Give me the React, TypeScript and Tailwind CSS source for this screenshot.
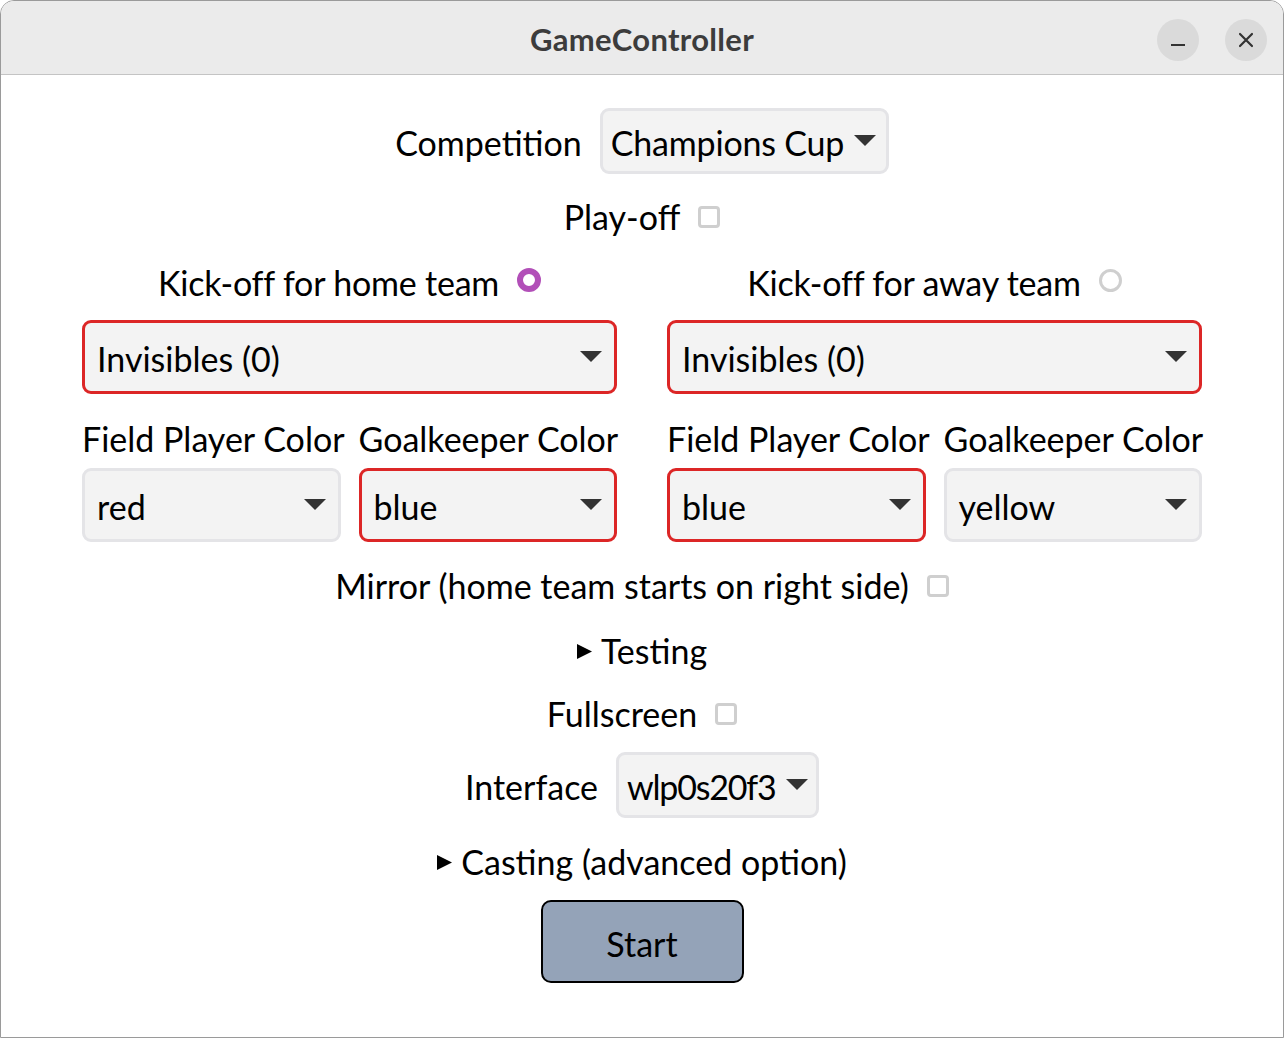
import React from 'react';

const font = { fontFamily: 'Lato, "Noto Sans", sans-serif' };

function Caret() {
  return (
    <svg width="22" height="12" viewBox="0 0 22 12" className="shrink-0">
      <path d="M0 0 L22 0 L11 11 Z" fill="#333333" />
    </svg>
  );
}

function Select({
  value,
  invalid,
  className,
  textClass = '',
}: {
  value: string;
  invalid?: boolean;
  className: string;
  textClass?: string;
}) {
  return (
    <div
      className={`flex items-center justify-between gap-[10px] rounded-[9px] bg-[#f3f3f3] border-[3px] ${
        invalid ? 'border-[#dc2626]' : 'border-[#e4e4e7]'
      } ${className}`}
    >
      <span className={`text-black leading-none pt-[4px] whitespace-nowrap ${textClass}`}>{value}</span>
      <Caret />
    </div>
  );
}

function Checkbox() {
  return <span className="inline-block w-[22px] h-[22px] rounded-[4px] border-[3px] border-[#cfcfcf] bg-white" />;
}

function Triangle() {
  return (
    <svg width="15" height="15" viewBox="0 0 15 15" className="shrink-0 mt-[3px]">
      <path d="M0 0 L15 7.5 L0 15 Z" fill="#000" />
    </svg>
  );
}

function App() {
  return (
    <div className="w-[1284px] h-[1038px] bg-white text-[34px] text-black" style={font}>
      <div className="h-full flex flex-col rounded-t-[14px] border border-[#9a9a9a] overflow-hidden">
        <div className="h-[74px] shrink-0 relative flex items-center justify-center bg-[#ebebeb] border-b border-[#c4c4c4]">
          <span className="text-[31px] font-bold text-[#3c3c3c] tracking-[0.3px] pt-[3px]">GameController</span>
          <div className="absolute right-[16px] top-[18px] flex gap-[26px]">
            <span className="w-[42px] h-[42px] rounded-full bg-[#dadada] flex items-center justify-center">
              <span className="w-[14px] h-[2px] bg-[#333] mt-[10px]" />
            </span>
            <span className="w-[42px] h-[42px] rounded-full bg-[#dadada] flex items-center justify-center">
              <svg width="16" height="16" viewBox="0 0 16 16">
                <path d="M2 2 L14 14 M14 2 L2 14" stroke="#333" strokeWidth="2.2" strokeLinecap="round" />
              </svg>
            </span>
          </div>
        </div>

        <div className="flex flex-col items-center">
          <div className="mt-[33px] h-[66px] flex items-center gap-[18px]">
            <span className="pt-[3px]">Competition</span>
            <Select value="Champions Cup" className="w-[289px] h-[66px] pl-[8px] pr-[10px] rounded-[8px]" textClass="tracking-[-0.2px]" />
          </div>

          <div className="mt-[22px] h-[40px] flex items-center gap-[18px]">
            <span className="pt-[1px]">Play-off</span>
            <span className="-mt-[4px]"><Checkbox /></span>
          </div>

          <div className="mt-[26px] w-[1120px] grid grid-cols-2 gap-x-[50px]">
            <div className="h-[40px] flex items-center justify-center gap-[18px]">
              <span className="pt-[1px] tracking-[-0.2px]">Kick-off for home team</span>
              <span className="-mt-[4px] w-[24px] h-[24px] rounded-full border-[6px] border-[#b24fb8] bg-white" />
            </div>
            <div className="h-[40px] flex items-center justify-center gap-[18px]">
              <span className="pt-[1px] tracking-[-0.2px]">Kick-off for away team</span>
              <span className="-mt-[4px] w-[23px] h-[23px] rounded-full border-[3px] border-[#cfcfcf] bg-white" />
            </div>

            <Select value="Invisibles (0)" invalid className="mt-[18px] h-[74px] pl-[12px] pr-[12px]" />
            <Select value="Invisibles (0)" invalid className="mt-[18px] h-[74px] pl-[12px] pr-[12px]" />

            <div className="mt-[24px] grid grid-cols-2 gap-x-[18px]">
              <span className="h-[40px] flex items-center whitespace-nowrap pt-[1px]">Field Player Color</span>
              <span className="h-[40px] flex items-center whitespace-nowrap pt-[1px]">Goalkeeper Color</span>
              <Select value="red" className="mt-[10px] h-[74px] pl-[12px] pr-[12px]" />
              <Select value="blue" invalid className="mt-[10px] h-[74px] pl-[12px] pr-[12px]" />
            </div>
            <div className="mt-[24px] grid grid-cols-2 gap-x-[18px]">
              <span className="h-[40px] flex items-center whitespace-nowrap pt-[1px]">Field Player Color</span>
              <span className="h-[40px] flex items-center whitespace-nowrap pt-[1px]">Goalkeeper Color</span>
              <Select value="blue" invalid className="mt-[10px] h-[74px] pl-[12px] pr-[12px]" />
              <Select value="yellow" className="mt-[10px] h-[74px] pl-[12px] pr-[12px]" />
            </div>
          </div>

          <div className="mt-[23px] h-[40px] flex items-center gap-[18px]">
            <span className="pt-[1px]">Mirror (home team starts on right side)</span>
            <span className="-mt-[4px]"><Checkbox /></span>
          </div>

          <div className="mt-[25px] h-[40px] flex items-center gap-[9px]">
            <Triangle />
            <span className="pt-[1px]">Testing</span>
          </div>

          <div className="mt-[23px] h-[40px] flex items-center gap-[18px]">
            <span className="pt-[1px]">Fullscreen</span>
            <span className="-mt-[4px]"><Checkbox /></span>
          </div>

          <div className="mt-[19px] h-[66px] flex items-center gap-[18px]">
            <span className="pt-[3px]">Interface</span>
            <Select value="wlp0s20f3" className="w-[203px] h-[66px] pl-[8px] pr-[12px] rounded-[8px] gap-[6px]" textClass="tracking-[-1.2px]" />
          </div>

          <div className="mt-[23px] h-[40px] flex items-center gap-[9px]">
            <Triangle />
            <span className="pt-[1px]">Casting (advanced option)</span>
          </div>

          <button
            type="button"
            className="mt-[19px] w-[203px] h-[83px] rounded-[10px] border-2 border-black bg-[#94a3b8] text-[34px] pt-[3px]"
          >
            Start
          </button>
        </div>
      </div>
    </div>
  );
}

export default App;
